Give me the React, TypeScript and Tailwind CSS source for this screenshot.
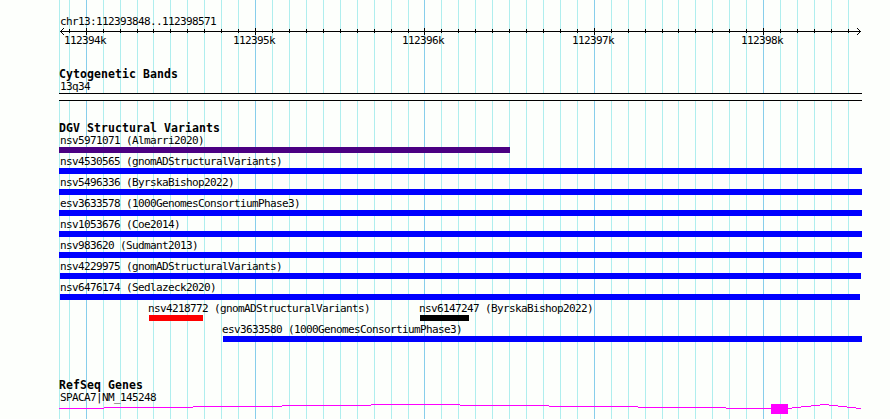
const MINOR_TICKS = [
  69, 103, 120, 137, 153, 170, 187, 204, 221, 238, 272, 289, 306, 323, 340,
  357, 374, 391, 408, 441, 458, 475, 492, 509, 526, 543, 560, 577, 611, 628,
  645, 662, 678, 695, 712, 729, 746, 780, 797, 814, 831, 848,
];
const MAJOR_TICKS = [86, 255, 424, 594, 763];

const label =
  "block h-3 whitespace-pre font-['DejaVu_Sans_Mono',monospace] text-[11px] leading-[14px] tracking-[-0.62px] text-black";
const heading =
  "h-3 whitespace-pre font-['DejaVu_Sans_Mono',monospace] text-[11.5px] font-bold leading-3 tracking-[0.08px] text-black";

const variants = [
  { name: "nsv5971071 (Almarri2020)", bar: "ml-[59px] w-[451px] bg-[#4b0082]" },
  { name: "nsv4530565 (gnomADStructuralVariants)", bar: "ml-[59px] w-[803px] bg-[#0000ff]" },
  { name: "nsv5496336 (ByrskaBishop2022)", bar: "ml-[59px] w-[803px] bg-[#0000ff]" },
  { name: "esv3633578 (1000GenomesConsortiumPhase3)", bar: "ml-[59px] w-[803px] bg-[#0000ff]" },
  { name: "nsv1053676 (Coe2014)", bar: "ml-[59px] w-[803px] bg-[#0000ff]" },
  { name: "nsv983620 (Sudmant2013)", bar: "ml-[59px] w-[803px] bg-[#0000ff]" },
  { name: "nsv4229975 (gnomADStructuralVariants)", bar: "ml-[60px] w-[801px] bg-[#0000ff]" },
  { name: "nsv6476174 (Sedlazeck2020)", bar: "ml-[60px] w-[800px] bg-[#0000ff]" },
];

function GridLines() {
  return (
    <svg
      className="absolute inset-0"
      width="890"
      height="419"
      shapeRendering="crispEdges"
    >
      {[59, ...MINOR_TICKS].map((x) => (
        <rect key={x} x={x} y="0" width="1" height="419" fill="#afeeee" />
      ))}
      {MAJOR_TICKS.map((x) => (
        <rect key={x} x={x} y="0" width="1" height="419" fill="#87ceeb" />
      ))}
    </svg>
  );
}

function Ruler() {
  return (
    <svg
      className="block"
      width="890"
      height="8"
      viewBox="0 27 890 8"
      shapeRendering="crispEdges"
    >
      <rect x="60" y="31" width="801" height="1" />
      {MINOR_TICKS.map((x) => (
        <rect key={x} x={x} y="29" width="1" height="4" />
      ))}
      {MAJOR_TICKS.map((x) => (
        <rect key={x} x={x} y="28" width="1" height="7" />
      ))}
      {/* arrow heads */}
      {[1, 2, 3].map((d) => (
        <g key={d}>
          <rect x={60 + d} y={31 - d} width="1" height="1" />
          <rect x={60 + d} y={31 + d} width="1" height="1" />
          <rect x={860 - d} y={31 - d} width="1" height="1" />
          <rect x={860 - d} y={31 + d} width="1" height="1" />
        </g>
      ))}
    </svg>
  );
}

// Each entry is [start, end, y] of one flat step of the intron line
const INTRON_STEPS = [
  [59, 104, 408], [104, 193, 407], [193, 282, 406], [282, 371, 405],
  [371, 460, 404], [460, 549, 405], [549, 638, 406], [638, 726, 407],
  [726, 792, 408], [792, 801, 407], [801, 811, 406], [811, 820, 405],
  [820, 829, 404], [829, 838, 405], [838, 847, 406], [847, 856, 407],
  [856, 861, 408],
];

function GeneModel() {
  return (
    <svg
      className="mt-px block"
      width="890"
      height="15"
      viewBox="0 404 890 15"
      shapeRendering="crispEdges"
      fill="#ff00ff"
    >
      {INTRON_STEPS.map(([start, end, y]) => (
        <rect key={start} x={start} y={y} width={end - start} height="1" />
      ))}
      <rect x="771" y="404" width="17" height="10" />
    </svg>
  );
}

export default function App() {
  return (
    <main className="relative h-[419px] w-[890px] overflow-hidden bg-[#fdfffc]">
      <GridLines />

      <div className="relative flex flex-col">
        {/* Position ruler */}
        <section className="pt-[15px]">
          <span className={`${label} pl-[60px]`}>chr13:112393848..112398571</span>
          <Ruler />
          <div className="-mt-px flex pb-px pl-16">
            <span className={`${label} w-[169px]`}>112394k</span>
            <span className={`${label} w-[169px]`}>112395k</span>
            <span className={`${label} w-[170px]`}>112396k</span>
            <span className={`${label} w-[169px]`}>112397k</span>
            <span className={label}>112398k</span>
          </div>
        </section>

        {/* Cytogenetic bands */}
        <section className="pt-[21px]">
          <h2 className={`${heading} pl-[59px]`}>Cytogenetic Bands</h2>
          <span className={`${label} pl-[60px]`}>13q34</span>
          <div className="ml-[59px] mt-px h-2 w-[803px] border-y border-black bg-[#fdfffc]" />
        </section>

        {/* Structural variants */}
        <section className="pt-[21px]">
          <h2 className={`${heading} pl-[59px]`}>DGV Structural Variants</h2>
          {variants.map((v) => (
            <div key={v.name} className="h-[21px]">
              <span className={`${label} pl-[60px]`}>{v.name}</span>
              <div className={`mt-px h-1.5 ${v.bar}`} />
            </div>
          ))}
          <div className="flex h-[21px]">
            <div className="w-[271px] pl-[148px]">
              <span className={label}>nsv4218772 (gnomADStructuralVariants)</span>
              <div className="ml-px mt-px h-1.5 w-[54px] bg-[#ff0000]" />
            </div>
            <div className="pl-[148px]">
              <span className={label}>nsv6147247 (ByrskaBishop2022)</span>
              <div className="ml-px mt-px h-1.5 w-[49px] bg-black" />
            </div>
          </div>
          <div className="h-[21px] pl-[222px]">
            <span className={label}>esv3633580 (1000GenomesConsortiumPhase3)</span>
            <div className="ml-px mt-px h-1.5 w-[639px] bg-[#0000ff]" />
          </div>
        </section>

        {/* Genes */}
        <section className="pt-[35px]">
          <h2 className={`${heading} pl-[59px]`}>RefSeq Genes</h2>
          <span className={`${label} pl-[60px]`}>SPACA7|NM_145248</span>
          <GeneModel />
        </section>
      </div>
    </main>
  );
}
